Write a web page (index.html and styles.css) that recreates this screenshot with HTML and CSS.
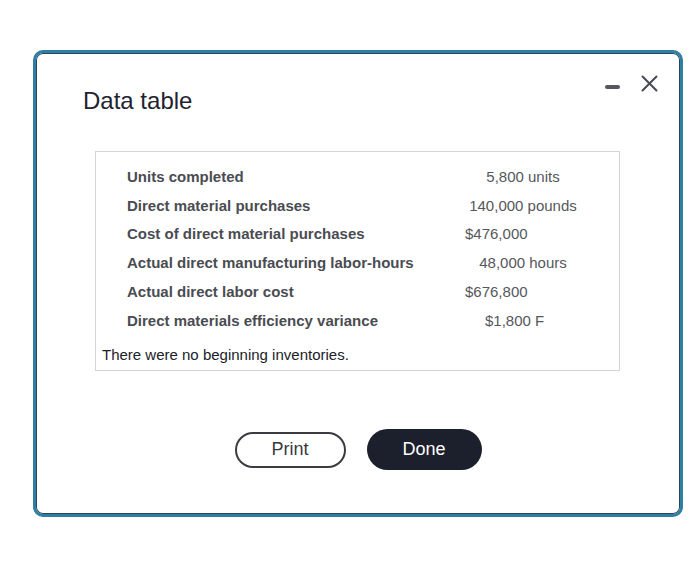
FILE: index.html
```html
<!DOCTYPE html>
<html lang="en">
<head>
<meta charset="utf-8">
<title>Data table</title>
<link rel="stylesheet" href="styles.css">
</head>
<body>
<div class="dialog">
  <div class="header">
    <h1 class="title">Data table</h1>
    <div class="controls">
      <span class="minimize"></span>
      <svg class="close" width="17" height="17" viewBox="0 0 17 17" aria-label="Close">
        <path d="M1.5 1.5 L15.5 15.5 M15.5 1.5 L1.5 15.5" stroke="#474a52" stroke-width="2" stroke-linecap="round" fill="none"/>
      </svg>
    </div>
  </div>
  <div class="databox">
    <div class="rows">
      <div class="label">Units completed</div>
      <div class="value c">5,800 units</div>
      <div class="label">Direct material purchases</div>
      <div class="value c">140,000 pounds</div>
      <div class="label">Cost of direct material purchases</div>
      <div class="value l">$476,000</div>
      <div class="label">Actual direct manufacturing labor-hours</div>
      <div class="value c">48,000 hours</div>
      <div class="label">Actual direct labor cost</div>
      <div class="value l">$676,800</div>
      <div class="label">Direct materials efficiency variance</div>
      <div class="value l2">$1,800 F</div>
    </div>
    <p class="note">There were no beginning inventories.</p>
  </div>
  <div class="buttons">
    <button class="btn print">Print</button>
    <button class="btn done">Done</button>
  </div>
</div>
</body>
</html>
```
FILE: styles.css
```css
html, body {
  margin: 0;
  padding: 0;
  background: #ffffff;
}
body {
  padding: 50px 0 0 33px;
  font-family: "Liberation Sans", Arial, sans-serif;
}
.dialog {
  box-sizing: border-box;
  width: 650px;
  height: 467px;
  border: 3px solid #2f7ea4;
  border-radius: 10px;
  box-shadow: inset 0 0 0 1px #27465a;
  background: #ffffff;
  padding: 22px 22px 0 22px;
}
.header {
  display: flex;
  justify-content: space-between;
  align-items: flex-start;
}
.title {
  margin: 12px 0 0 25px;
  font-size: 24px;
  line-height: 28px;
  font-weight: normal;
  color: #1f2331;
}
.controls {
  display: flex;
  align-items: center;
  gap: 21px;
  height: 17px;
}
.minimize {
  display: block;
  width: 15px;
  height: 4px;
  margin-top: 6px;
  border-radius: 2px;
  background: #55585e;
}
.close {
  display: block;
}
.databox {
  box-sizing: border-box;
  width: 525px;
  height: 220px;
  margin: 36px 0 0 37px;
  border: 1px solid #d4d4d4;
  padding: 10px 0 0 0;
}
.rows {
  display: grid;
  grid-template-columns: 338px 116px;
  grid-auto-rows: 28.8px;
  align-items: center;
  padding-left: 31px;
  font-size: 15px;
}
.label {
  font-weight: bold;
  color: #4a4c52;
}
.value {
  color: #55575c;
}
.value.c {
  text-align: center;
}
.value.l {
  text-align: left;
}
.value.l2 {
  text-align: left;
  padding-left: 20px;
}
.note {
  margin: 10px 0 0 6px;
  font-size: 15px;
  line-height: 20px;
  color: #202228;
}
.buttons {
  display: flex;
  justify-content: center;
  align-items: center;
  gap: 21px;
  margin-top: 58px;
}
.btn {
  font-family: "Liberation Sans", Arial, sans-serif;
  font-size: 18px;
  border-radius: 21px;
  cursor: pointer;
}
.print {
  box-sizing: border-box;
  width: 111px;
  height: 36px;
  background: #ffffff;
  border: 2px solid #3a3c42;
  color: #36383e;
}
.done {
  box-sizing: border-box;
  width: 115px;
  height: 41px;
  background: #1c1f2c;
  border: none;
  color: #ffffff;
}
```
